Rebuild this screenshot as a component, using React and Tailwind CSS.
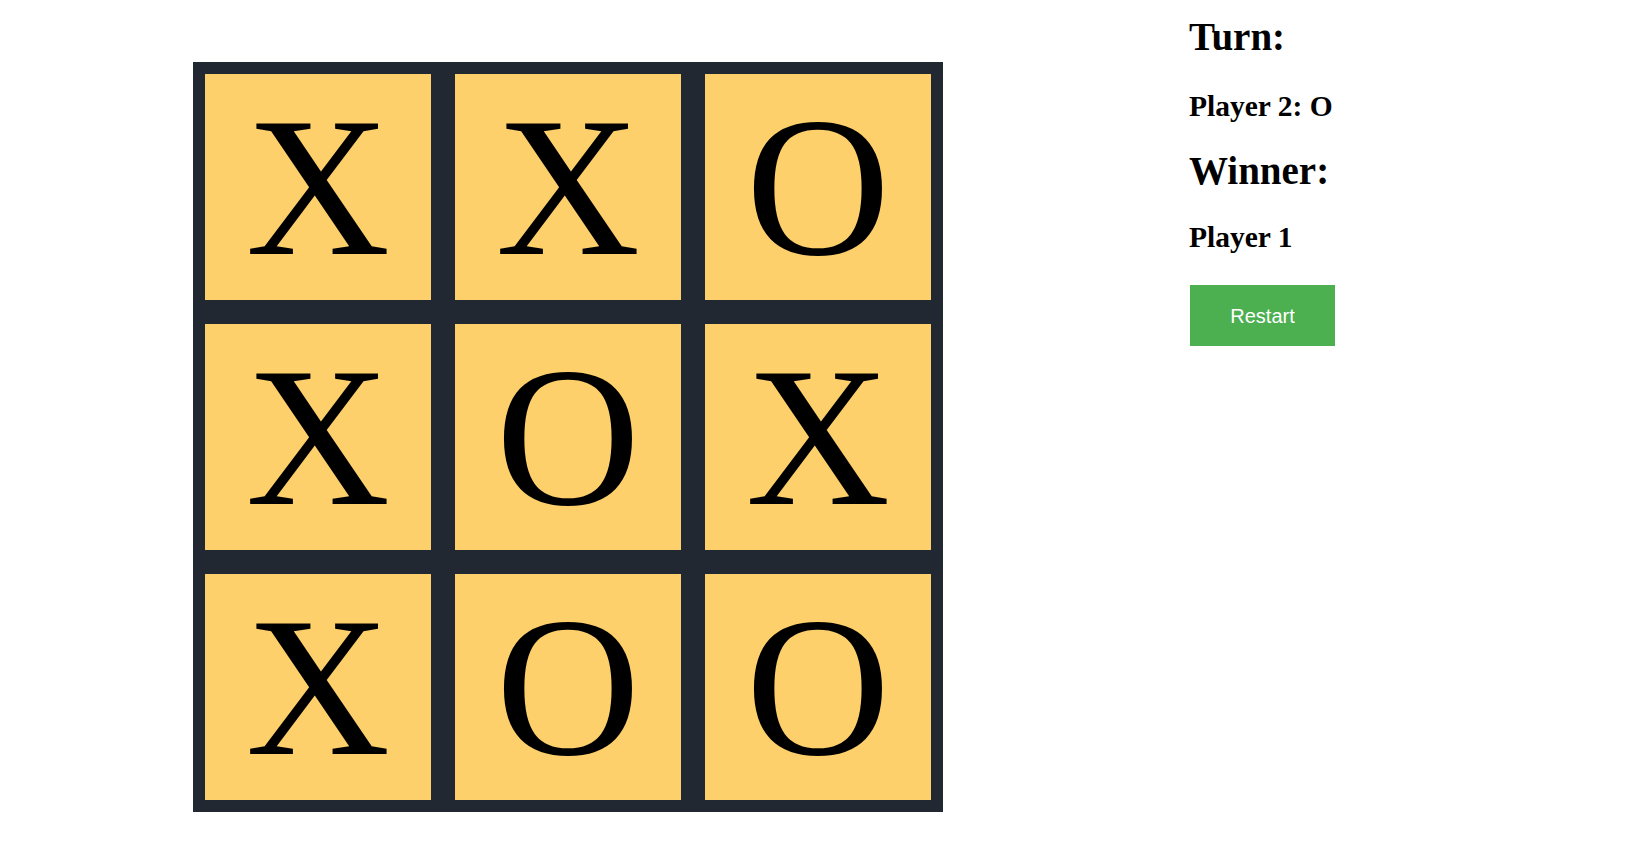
import React from "react";

const board = ["X", "X", "O", "X", "O", "X", "X", "O", "O"];

export default function App() {
  return (
    <div className="flex items-start bg-white min-h-[842px] w-[1636px]" style={{ fontFamily: '"Liberation Serif", "Times New Roman", serif' }}>
      <div className="ml-[193px] mt-[62px] bg-[#222831] p-[12px] grid grid-cols-[226px_226px_226px] grid-rows-[226px_226px_226px] gap-[24px]">
        {board.map((v, i) => (
          <div key={i} className="bg-[#fdd06b] flex items-center justify-center text-[200px] leading-[200px] text-black font-normal">
            {v}
          </div>
        ))}
      </div>
      <div className="ml-[246px] pt-[17px] flex flex-col items-start text-black font-bold">
        <div className="text-[39px] leading-[39px] h-[39px]">Turn:</div>
        <div className="mt-[35.5px] text-[29.5px] leading-[29px] h-[29px]">Player 2: O</div>
        <div className="mt-[30px] text-[39px] leading-[39px] h-[39px]">Winner:</div>
        <div className="mt-[33px] text-[29.5px] leading-[29px] h-[29px]">Player 1</div>
        <button className="mt-[33.5px] ml-[1px] w-[145px] h-[61px] bg-[#4caf50] text-white text-[20px] font-normal flex items-center justify-center" style={{ fontFamily: '"Liberation Sans", Arial, sans-serif' }}>
          Restart
        </button>
      </div>
    </div>
  );
}
